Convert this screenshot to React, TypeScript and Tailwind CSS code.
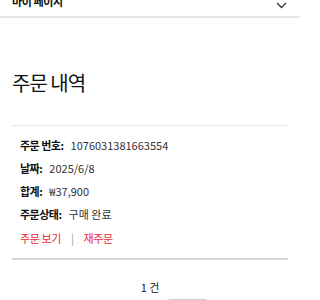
const fontStack = { fontFamily: '"Noto Sans CJK KR", "Noto Sans", sans-serif' };

const orderRows = [
  { label: "주문 번호:", value: "1076031381663554" },
  { label: "날짜:", value: "2025/6/8" },
  { label: "합계:", value: "₩37,900" },
  { label: "주문상태:", value: "구매 완료" },
];

export default function App() {
  return (
    <div className="h-[300px] w-[300px] overflow-hidden bg-white text-[#222]" style={fontStack}>
      <header className="h-[18px] overflow-hidden border-b-2 border-[#e6e6e6]">
        <div className="-mt-[8px] flex items-center justify-between pl-3 pr-[13px]">
          <span className="text-[11px] font-bold leading-[18px] tracking-[-0.4px] text-[#111]">
            마이 페이지
          </span>
          <svg width="11" height="7" viewBox="0 0 11 7" fill="none" className="mt-[8px]">
            <path d="M1 1l4.5 4.5L10 1" stroke="#333" strokeWidth="1.3" />
          </svg>
        </div>
      </header>

      <main className="px-3">
        <h1 className="mt-[50px] text-[20px] font-normal leading-[30px] tracking-[-1px] text-[#111]">
          주문 내역
        </h1>

        <div className="mt-[27px] border-t border-[#e8e8e8]" />

        <dl className="mt-[12px] space-y-[8px] px-2 text-[11px] leading-[15px]">
          {orderRows.map((row) => (
            <div key={row.label} className="flex">
              <dt className="mr-[7px] font-bold tracking-[-0.5px] text-[#111]">{row.label}</dt>
              <dd className="text-[#333]">{row.value}</dd>
            </div>
          ))}
        </dl>

        <div className="mt-[9px] flex items-center px-2 text-[11px] leading-[15px] tracking-[-0.4px]">
          <a className="text-[#e8283a]">주문 보기</a>
          <span className="mx-[10px] text-[#999]">|</span>
          <a className="text-[#e8283a]">재주문</a>
        </div>

        <div className="mt-[12px] border-t-2 border-[#d4d4d4]" />

        <p className="mt-[20px] text-center text-[11px] leading-[15px] text-[#222]">1 건</p>

        <div className="mt-[4px] flex justify-center pl-[75px]">
          <div className="h-[20px] w-[41px] rounded-[3px] border border-[#ccc]" />
        </div>
      </main>
    </div>
  );
}
